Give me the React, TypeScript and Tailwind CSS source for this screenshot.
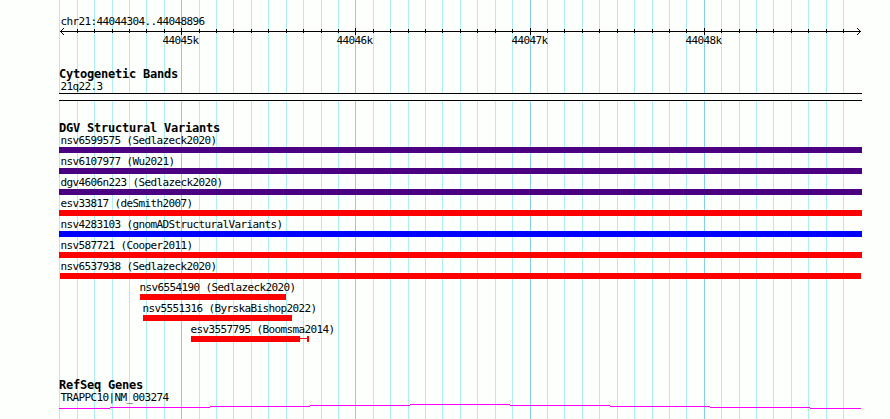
import clsx from "clsx";

type Variant = {
  name: string;
  start: number;
  end: number;
  color: string;
  // right end of the uncertain region, drawn as a whisker
  whisker?: number;
};

const LEFT = 59;
const RIGHT = 862;

const gridLines = [
  59, 77, 94, 112, 129, 146, 164, 181, 199, 216, 233, 251, 268, 286, 303, 321,
  338, 355, 373, 390, 408, 425, 442, 460, 477, 495, 512, 530, 547, 564, 582,
  599, 617, 634, 652, 669, 686, 704, 721, 739, 756, 773, 791, 808, 826, 843,
];

const majorTicks = [
  { x: 181, label: "44045k" },
  { x: 355, label: "44046k" },
  { x: 530, label: "44047k" },
  { x: 704, label: "44048k" },
];

const isMajor = (x: number) => majorTicks.some((t) => t.x === x);

const variants: Variant[] = [
  { name: "nsv6599575 (Sedlazeck2020)", start: 59, end: 862, color: "bg-[#4b0082]" },
  { name: "nsv6107977 (Wu2021)", start: 59, end: 862, color: "bg-[#4b0082]" },
  { name: "dgv4606n223 (Sedlazeck2020)", start: 59, end: 862, color: "bg-[#4b0082]" },
  { name: "esv33817 (deSmith2007)", start: 59, end: 862, color: "bg-[#ff0000]" },
  { name: "nsv4283103 (gnomADStructuralVariants)", start: 59, end: 862, color: "bg-[#0000ff]" },
  { name: "nsv587721 (Cooper2011)", start: 59, end: 862, color: "bg-[#ff0000]" },
  { name: "nsv6537938 (Sedlazeck2020)", start: 60, end: 861, color: "bg-[#ff0000]" },
  { name: "nsv6554190 (Sedlazeck2020)", start: 140, end: 286, color: "bg-[#ff0000]" },
  { name: "nsv5551316 (ByrskaBishop2022)", start: 143, end: 292, color: "bg-[#ff0000]" },
  { name: "esv3557795 (Boomsma2014)", start: 191, end: 300, color: "bg-[#ff0000]", whisker: 309 },
];

// [x, y] of each 1px step of the gene line, relative to its svg
const geneSteps = [
  [59, 4], [110, 3], [210, 2], [310, 1], [410, 0],
  [510, 1], [610, 2], [710, 3], [810, 4],
];

function Grid() {
  return (
    <svg className="absolute inset-0" width="890" height="419" shapeRendering="crispEdges">
      {gridLines.map((x) => (
        <rect key={x} x={x} y="0" width="1" height="419" fill={isMajor(x) ? "#87ceeb" : "#afeeee"} />
      ))}
    </svg>
  );
}

function Ruler() {
  return (
    <svg className="block" width="890" height="20" viewBox="0 28 890 20">
      <g shapeRendering="crispEdges">
        <rect x="60" y="31" width="801" height="1" />
        {gridLines.slice(1).map((x) =>
          isMajor(x) ? (
            <rect key={x} x={x} y="28" width="1" height="7" />
          ) : (
            <rect key={x} x={x} y="29" width="1" height="4" />
          )
        )}
        {[1, 2, 3].map((d) => (
          <g key={d}>
            <rect x={60 + d} y={31 - d} width="1" height="1" />
            <rect x={60 + d} y={31 + d} width="1" height="1" />
            <rect x={860 - d} y={31 - d} width="1" height="1" />
            <rect x={860 - d} y={31 + d} width="1" height="1" />
          </g>
        ))}
      </g>
      {majorTicks.map((t) => (
        <text key={t.label} x={t.x - 18.5} y="44" className="text-[11px] tracking-[-0.622px]">
          {t.label}
        </text>
      ))}
    </svg>
  );
}

function TrackTitle({ children }: { children: string }) {
  return (
    <h2 className="h-[13px] pl-[59px] text-[12px] font-bold leading-[13px] tracking-[-0.224px]">
      {children}
    </h2>
  );
}

function Label({ children, start = 60.5 }: { children: string; start?: number }) {
  return (
    <div className="h-[13px] text-[11px] leading-[13px] tracking-[-0.622px]" style={{ paddingLeft: start }}>
      {children}
    </div>
  );
}

function VariantRow({ variant }: { variant: Variant }) {
  const { name, start, end, color, whisker } = variant;
  return (
    <div className="h-[21px] pt-[2px]">
      <Label start={Math.max(60.5, start - 0.5)}>{name}</Label>
      <div className="flex h-[6px]" style={{ paddingLeft: start }}>
        <div className={clsx("h-full", color)} style={{ width: end - start }} />
        {whisker && (
          <>
            <div className={clsx("mt-[2px] h-px", color)} style={{ width: whisker - end - 2 }} />
            <div className={clsx("h-full w-[2px]", color)} />
          </>
        )}
      </div>
    </div>
  );
}

function GeneLine() {
  return (
    <svg className="block" width="890" height="5" shapeRendering="crispEdges" fill="#ff00ff">
      {geneSteps.map(([x, y], i) => (
        <rect key={x} x={x} y={y} width={(geneSteps[i + 1]?.[0] ?? 861) - x} height="1" />
      ))}
    </svg>
  );
}

export default function App() {
  return (
    <main className="relative h-[419px] w-[890px] overflow-hidden whitespace-pre bg-[#fdfffc] font-['DejaVu_Sans_Mono',monospace] text-black">
      <Grid />
      <div className="relative pt-[15px]">
        <Label>chr21:44044304..44048896</Label>
        <Ruler />

        <section className="mt-[20px]">
          <TrackTitle>Cytogenetic Bands</TrackTitle>
          <div className="-mt-px">
            <Label>21q22.3</Label>
          </div>
          <div className="ml-[59px] h-[8px] border-y border-black bg-[#fdfffc]" style={{ width: RIGHT - LEFT }} />
        </section>

        <section className="mt-[21px]">
          <TrackTitle>DGV Structural Variants</TrackTitle>
          <div className="-mt-[3px]">
            {variants.map((v) => (
              <VariantRow key={v.name} variant={v} />
            ))}
          </div>
        </section>

        <section className="mt-[37px]">
          <TrackTitle>RefSeq Genes</TrackTitle>
          <div className="-mt-px">
            <Label>TRAPPC10|NM_003274</Label>
          </div>
          <GeneLine />
        </section>
      </div>
    </main>
  );
}
